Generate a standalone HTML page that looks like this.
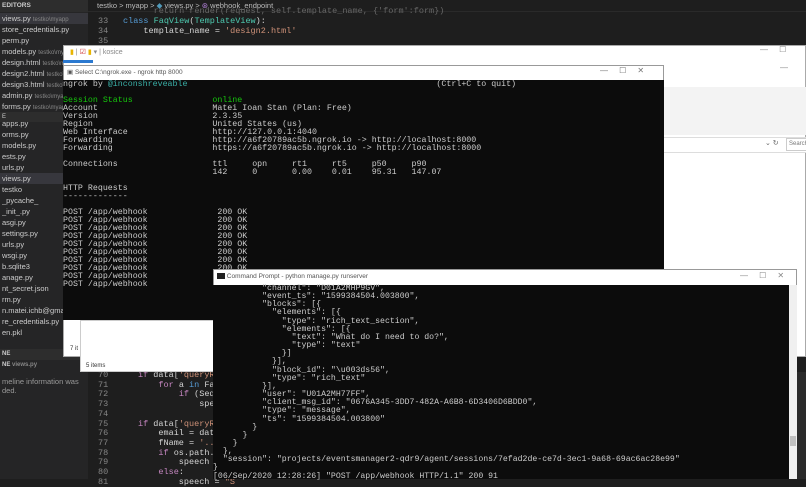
<!DOCTYPE html>
<html><head><meta charset="utf-8"><style>
*{margin:0;padding:0;box-sizing:border-box}
body{width:806px;height:479px;overflow:hidden;background:#1e1e1e;position:relative;font-family:"Liberation Sans",sans-serif}
.a{position:absolute}
.sb{left:0;top:0;width:88px;height:479px;background:#252526}
.si{position:absolute;left:2px;font-size:7.5px;color:#ccc;white-space:nowrap;line-height:11px;height:11px;width:86px;overflow:hidden}
.si span{color:#888;font-size:6px}
.mono{font-family:"Liberation Mono",monospace;white-space:pre}
.code{font-size:8.5px;color:#d4d4d4;line-height:10px}
.ng{left:63px;top:80px;width:601px;height:240px;background:#0c0c0c;color:#ccc;font-size:8.3px;line-height:8px;padding-top:1px;overflow:hidden}
.cp{left:213px;top:285px;width:584px;height:194px;background:#0c0c0c;color:#ccc;font-size:8.2px;line-height:8.15px}
</style></head><body>
<div class="a sb"></div>
<div class="a" style="left:0;top:0;width:88px;height:12px;background:#2d2d2d"></div>
<div class="a" style="left:0;top:13px;width:88px;height:11px;background:#37373d"></div>
<div class="a" style="left:0;top:112px;width:88px;height:10px;background:#2d2d2d"></div>
<div class="a" style="left:0;top:173px;width:88px;height:11px;background:#37373d"></div>
<div class="a" style="left:0;top:349px;width:88px;height:11px;background:#2d2d2d"></div>
<div class="si" style="top:0;font-weight:bold;font-size:6.5px">EDITORS</div>
<div class="si" style="top:13px">views.py <span>testko\myapp</span></div>
<div class="si" style="top:24px">store_credentials.py</div>
<div class="si" style="top:35px">perm.py</div>
<div class="si" style="top:46px">models.py <span>testko\myapp</span></div>
<div class="si" style="top:57px">design.html <span>testko\m</span></div>
<div class="si" style="top:68px">design2.html <span>testko\m</span></div>
<div class="si" style="top:79px">design3.html <span>testko\m</span></div>
<div class="si" style="top:90px">admin.py <span>testko\myapp</span></div>
<div class="si" style="top:101px">forms.py <span>testko\myapp</span></div>
<div class="si" style="top:112px;font-size:6px">E</div>
<div class="si" style="top:118px">apps.py</div>
<div class="si" style="top:129px">orms.py</div>
<div class="si" style="top:140px">models.py</div>
<div class="si" style="top:151px">ests.py</div>
<div class="si" style="top:162px">urls.py</div>
<div class="si" style="top:173px">views.py</div>
<div class="si" style="top:184px">testko</div>
<div class="si" style="top:195px">_pycache_</div>
<div class="si" style="top:206px">_init_.py</div>
<div class="si" style="top:217px">asgi.py</div>
<div class="si" style="top:228px">settings.py</div>
<div class="si" style="top:239px">urls.py</div>
<div class="si" style="top:250px">wsgi.py</div>
<div class="si" style="top:261px">b.sqlite3</div>
<div class="si" style="top:272px">anage.py</div>
<div class="si" style="top:283px">nt_secret.json</div>
<div class="si" style="top:294px">rm.py</div>
<div class="si" style="top:305px">n.matei.ichb@gmail.co</div>
<div class="si" style="top:316px">re_credentials.py</div>
<div class="si" style="top:327px">en.pkl</div>
<div class="si" style="top:349px;font-weight:bold;font-size:6px">NE</div>
<div class="si" style="top:360px;font-size:6px;font-weight:bold">NE <span>views.py</span></div>
<div class="si" style="top:376px;color:#999">meline information was</div>
<div class="si" style="top:385px;color:#999">ded.</div>

<div class="a" style="left:88px;top:0;width:718px;height:12px;background:#1e1e1e;border-bottom:1px solid #2a2a2a"></div>
<div class="a" style="left:97px;top:0;font-size:7.5px;color:#bbb;line-height:12px">testko &gt; myapp &gt; <span style="color:#519aba">◆</span> views.py &gt; <span style="color:#b180d7">⊛</span> webhook_endpoint</div>
<div class="a mono code" style="left:98px;top:16px;color:#858585">33
34
35</div>
<div class="a mono code" style="left:123px;top:16px"><span style="color:#569cd6">class</span> <span style="color:#4ec9b0">FaqView</span>(<span style="color:#4ec9b0">TemplateView</span>):
    template_name = <span style="color:#ce9178">'design2.html'</span></div>
<div class="a mono code" style="left:123px;top:6px;color:#666">      return render(request, self.template_name, {'form':form})</div>

<div class="a mono code" style="left:98px;top:371px;color:#858585;line-height:9.7px">70
71
72
73
74
75
76
77
78
79
80
81</div>
<div class="a mono code" style="left:138px;top:371px;line-height:9.7px"><span style="color:#c586c0">if</span> data[<span style="color:#ce9178">'queryResu</span>
    <span style="color:#c586c0">for</span> a <span style="color:#569cd6">in</span> Faq.ob
        <span style="color:#c586c0">if</span> (Sequenc
            speech =

<span style="color:#c586c0">if</span> data[<span style="color:#ce9178">'queryResul</span>
    email = data[<span style="color:#ce9178">'q</span>
    fName = <span style="color:#ce9178">'../'</span> +
    <span style="color:#c586c0">if</span> os.path.exis
        speech = <span style="color:#ce9178">'G</span>
    <span style="color:#c586c0">else</span>:
        speech = <span style="color:#ce9178">"S</span></div>

<div class="a" style="left:63px;top:45px;width:743px;height:312px;background:#fff;border:1px solid #aaa"></div>
<div class="a" style="left:70px;top:48px;font-size:7px;color:#888;line-height:9px"><span style="color:#e8b400">▮</span> | <span style="color:#c33">☑</span> <span style="color:#e8b400">▮</span> ▾ | kosice</div>
<div class="a" style="left:760px;top:45px;font-size:8px;color:#888">—&nbsp;&nbsp;&nbsp;&nbsp;&nbsp;☐</div>
<div class="a" style="left:63px;top:60px;width:30px;height:3px;background:#2b79d0"></div>
<div class="a" style="left:664px;top:87px;width:142px;height:48px;background:#f3f3f3"></div>
<div class="a" style="left:664px;top:137px;width:142px;height:16px;background:#fff;border-top:1px solid #ddd;border-bottom:1px solid #ddd"></div>
<div class="a" style="left:765px;top:139px;font-size:7px;color:#666">⌄ ↻</div>
<div class="a" style="left:786px;top:138px;width:22px;height:13px;border:1px solid #ccc;font-size:6px;color:#777;padding:2px">Search</div>
<div class="a" style="left:780px;top:63px;font-size:8px;color:#888">—</div>
<div class="a" style="left:70px;top:346px;font-size:6px;color:#333">7 it</div>
<div class="a" style="left:80px;top:320px;width:134px;height:52px;background:#fff;border:1px solid #ccc"></div>
<div class="a" style="left:86px;top:363px;font-size:6px;color:#333">5 items</div>

<div class="a" style="left:63px;top:65px;width:601px;height:15px;background:#fff;border:1px solid #999;border-bottom:none"></div>
<div class="a" style="left:67px;top:68px;font-size:6.5px;color:#555">▣ Select C:\ngrok.exe - ngrok  http 8000</div>
<div class="a" style="left:600px;top:66px;font-size:8px;color:#777">—&nbsp;&nbsp;&nbsp;&nbsp;&nbsp;☐&nbsp;&nbsp;&nbsp;&nbsp;&nbsp;✕</div>
<div class="a mono ng">ngrok by <span style="color:#3ab0a8">@inconshreveable</span>                                                  (Ctrl+C to quit)

<span style="color:#16c60c">Session Status</span>                <span style="color:#16c60c">online</span>
Account                       Matei Ioan Stan (Plan: Free)
Version                       2.3.35
Region                        United States (us)
Web Interface                 http://127.0.0.1:4040
Forwarding                    http://a6f20789ac5b.ngrok.io -> http://localhost:8000
Forwarding                    https://a6f20789ac5b.ngrok.io -> http://localhost:8000

Connections                   ttl     opn     rt1     rt5     p50     p90
                              142     0       0.00    0.01    95.31   147.07

HTTP Requests
-------------

POST /app/webhook              200 OK
POST /app/webhook              200 OK
POST /app/webhook              200 OK
POST /app/webhook              200 OK
POST /app/webhook              200 OK
POST /app/webhook              200 OK
POST /app/webhook              200 OK
POST /app/webhook              200 OK
POST /app/webhook              200 OK
POST /app/webhook              200 OK</div>

<div class="a" style="left:213px;top:269px;width:584px;height:16px;background:#fff;border:1px solid #999;border-bottom:none"></div>
<div class="a" style="left:217px;top:273px;font-size:6.5px;color:#555"><span style="display:inline-block;width:8px;height:6px;background:#222;vertical-align:middle"></span> Command Prompt - python  manage.py runserver</div>
<div class="a" style="left:740px;top:271px;font-size:8px;color:#888">—&nbsp;&nbsp;&nbsp;&nbsp;&nbsp;☐&nbsp;&nbsp;&nbsp;&nbsp;&nbsp;✕</div>
<div class="a mono cp">          "channel": "D01A2MHP9GV",
          "event_ts": "1599384504.003800",
          "blocks": [{
            "elements": [{
              "type": "rich_text_section",
              "elements": [{
                "text": "What do I need to do?",
                "type": "text"
              }]
            }],
            "block_id": "\u003ds56",
            "type": "rich_text"
          }],
          "user": "U01A2MH77FF",
          "client_msg_id": "0676A345-3DD7-482A-A6B8-6D3406D6BDD0",
          "type": "message",
          "ts": "1599384504.003800"
        }
      }
    }
  },
  "session": "projects/eventsmanager2-qdr9/agent/sessions/7efad2de-ce7d-3ec1-9a68-69ac6ac28e99"
}
[06/Sep/2020 12:28:26] "POST /app/webhook HTTP/1.1" 200 91</div>
<div class="a" style="left:789px;top:285px;width:8px;height:194px;background:#f0f0f0"></div>
<div class="a" style="left:790px;top:436px;width:6px;height:10px;background:#c0c0c0"></div>
<div class="a" style="left:797px;top:372px;width:9px;height:107px;background:#2a2a2a"></div>
</body></html>
